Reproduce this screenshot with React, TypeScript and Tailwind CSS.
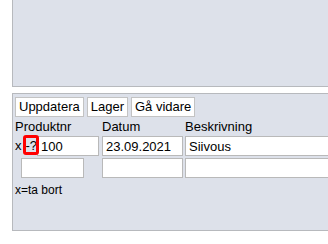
export default function App() {
  const input = 'block h-[20px] border border-[#b9b9b9] bg-white px-[3px] text-[13px] leading-[18px] text-black'
  const button = 'h-[20px] border border-[#c3c3c3] bg-white px-[3px] text-[13px] leading-[18px] text-black'

  return (
    <div className="w-[328px] h-[244px] overflow-hidden bg-white text-black" style={{ fontFamily: '"Liberation Sans", Arial, sans-serif' }}>
      <div className="ml-[12px] w-[340px] h-[87px] bg-[#dde1ea] border-l border-b border-[#b7b9bd]" />

      <div className="mt-[6px] ml-[12px] w-[340px] h-[138px] bg-[#dde1ea] border-l border-t border-b border-[#b7b9bd] pt-[3px] pl-[2px]">
        <div className="flex gap-[3px]">
          <button className={button}>Uppdatera</button>
          <button className={button}>Lager</button>
          <button className={button}>Gå vidare</button>
        </div>

        <div className="flex mt-[2px] text-[13px] leading-[16px]">
          <div className="w-[87px]">Produktnr</div>
          <div className="w-[83px]">Datum</div>
          <div className="flex-1">Beskrivning</div>
        </div>

        <div className="flex mt-[1px] items-center">
          <div className="w-[87px] flex items-center text-[13px] leading-[16px]">
            <span>x</span>
            <span className="relative ml-[4px]">
              -?
              <span className="absolute left-[-3px] top-[-3px] w-[16px] h-[20px] border-[3px] border-[#ff0000] rounded-[3px]" />
            </span>
            <input className={`${input} w-[62px] ml-auto mr-[3px]`} defaultValue="100" readOnly />
          </div>
          <div className="w-[83px]">
            <input className={`${input} w-[81px]`} defaultValue="23.09.2021" readOnly />
          </div>
          <div className="flex-1">
            <input className={`${input} w-full`} defaultValue="Siivous" readOnly />
          </div>
        </div>

        <div className="flex mt-[2px]">
          <div className="w-[87px]">
            <input className={`${input} w-[63px] ml-[6px]`} readOnly />
          </div>
          <div className="w-[83px]">
            <input className={`${input} w-[81px]`} readOnly />
          </div>
          <div className="flex-1">
            <input className={`${input} w-full`} readOnly />
          </div>
        </div>

        <div className="mt-[5px] text-[12px] leading-[14px]">x=ta bort</div>
      </div>
    </div>
  )
}
